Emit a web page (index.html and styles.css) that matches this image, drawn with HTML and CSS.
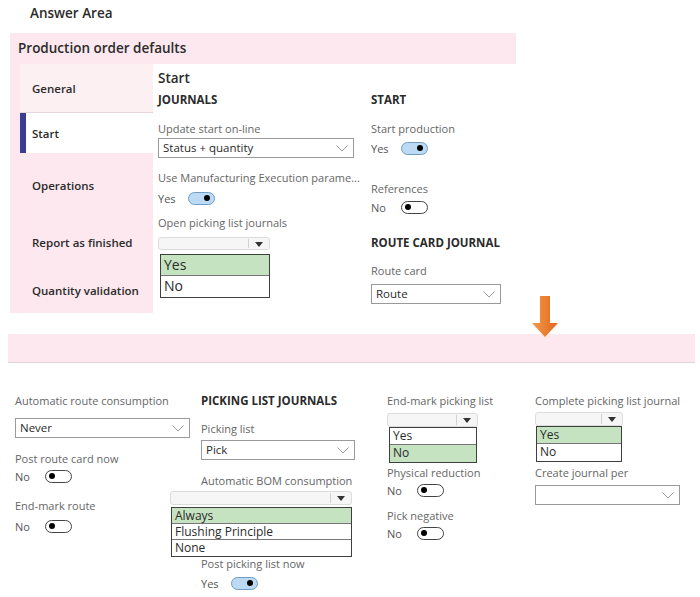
FILE: index.html
```html
<!DOCTYPE html>
<html lang="en">
<head>
    <meta charset="UTF-8">
    <title>Answer Area</title>
    <link rel="stylesheet" href="styles.css">
</head>
<body>
    <div class="title">Answer Area</div>

    <div class="top">
        <div class="panel">
            <div class="panel-header">Production order defaults</div>
            <div class="panel-body">
                <!-- Tabs -->
                <div class="sidebar">
                    <div class="tab tab-general">General</div>
                    <div class="tab tab-start active">Start</div>
                    <div class="tab tab-ops">Operations</div>
                    <div class="tab tab-report">Report as finished</div>
                    <div class="tab tab-qty">Quantity validation</div>
                </div>

                <div class="content">
                    <div class="content-title">Start</div>
                    <div class="columns">
                        <div class="col col-journals">
                            <div class="section">JOURNALS</div>
                            <div class="label l-update">Update start on-line</div>
                            <div class="select s-status">Status + quantity<svg class="chev" viewBox="0 0 12 7"><polyline points="0.5,0.5 6,6 11.5,0.5"/></svg></div>
                            <div class="label l-mes">Use Manufacturing Execution parame...</div>
                            <div class="toggle-row t-mes"><span class="val">Yes</span><span class="toggle on"></span></div>
                            <div class="label l-open">Open picking list journals</div>
                            <div class="stub stub-open"><span class="stub-arrow"></span></div>
                            <div class="options big opt-open">
                                <div class="opt sel">Yes</div>
                                <div class="opt">No</div>
                            </div>
                        </div>
                        <div class="col col-start">
                            <div class="section">START</div>
                            <div class="label l-update">Start production</div>
                            <div class="toggle-row t-prod"><span class="val">Yes</span><span class="toggle on"></span></div>
                            <div class="label l-refs">References</div>
                            <div class="toggle-row t-refs"><span class="val">No</span><span class="toggle"></span></div>
                            <div class="section s-route">ROUTE CARD JOURNAL</div>
                            <div class="label l-routecard">Route card</div>
                            <div class="select s-route-sel">Route<svg class="chev" viewBox="0 0 12 7"><polyline points="0.5,0.5 6,6 11.5,0.5"/></svg></div>
                        </div>
                    </div>
                </div>
            </div>
        </div>
        <div class="arrow">
            <svg viewBox="0 0 26 42" width="26" height="42">
                <defs>
                    <linearGradient id="og" x1="0" y1="0" x2="1" y2="0">
                        <stop offset="0" stop-color="#f39a4d"/>
                        <stop offset="1" stop-color="#e2661a"/>
                    </linearGradient>
                </defs>
                <polygon points="8,0 18,0 18,27 26,27 13,41 0,27 8,27" fill="url(#og)"/>
            </svg>
        </div>
    </div>

    <div class="bar"></div>

    <div class="bottom">
        <div class="col b-col1">
            <div class="label l-arc">Automatic route consumption</div>
            <div class="select s-never">Never<svg class="chev" viewBox="0 0 12 7"><polyline points="0.5,0.5 6,6 11.5,0.5"/></svg></div>
            <div class="label l-prc">Post route card now</div>
            <div class="toggle-row t-prc"><span class="val">No</span><span class="toggle"></span></div>
            <div class="label l-emr">End-mark route</div>
            <div class="toggle-row t-emr"><span class="val">No</span><span class="toggle"></span></div>
        </div>

        <div class="col b-col2">
            <div class="section s-pick">PICKING LIST JOURNALS</div>
            <div class="label l-pl">Picking list</div>
            <div class="select s-pick-sel">Pick<svg class="chev" viewBox="0 0 12 7"><polyline points="0.5,0.5 6,6 11.5,0.5"/></svg></div>
            <div class="label l-bom">Automatic BOM consumption</div>
            <div class="stub stub-bom"><span class="stub-arrow"></span></div>
            <div class="options opt-bom">
                <div class="opt sel">Always</div>
                <div class="opt">Flushing Principle</div>
                <div class="opt">None</div>
            </div>
            <div class="label l-ppl">Post picking list now</div>
            <div class="toggle-row t-ppl"><span class="val">Yes</span><span class="toggle on"></span></div>
        </div>

        <div class="col b-col3">
            <div class="label l-top">End-mark picking list</div>
            <div class="stub stub-emp"><span class="stub-arrow"></span></div>
            <div class="options opt-emp">
                <div class="opt">Yes</div>
                <div class="opt sel">No</div>
            </div>
            <div class="label l-phys">Physical reduction</div>
            <div class="toggle-row t-phys"><span class="val">No</span><span class="toggle"></span></div>
            <div class="label l-neg">Pick negative</div>
            <div class="toggle-row t-neg"><span class="val">No</span><span class="toggle"></span></div>
        </div>

        <div class="col b-col4">
            <div class="label l-top">Complete picking list journal</div>
            <div class="stub stub-cpl"><span class="stub-arrow"></span></div>
            <div class="options opt-cpl">
                <div class="opt sel">Yes</div>
                <div class="opt">No</div>
            </div>
            <div class="label l-phys">Create journal per</div>
            <div class="select s-create"><svg class="chev" viewBox="0 0 12 7"><polyline points="0.5,0.5 6,6 11.5,0.5"/></svg></div>
        </div>
    </div>
</body>
</html>
```

FILE: styles.css
```css
:root {
    --pink: #fce8ee;
    --pink-light: #fdf0f3;
    --text: #2b2b2b;
    --label: #666666;
    --green: #c5e2c1;
    --blue-bar: #3a3d91;
}

* {
    box-sizing: border-box;
}

body {
    margin: 0;
    width: 700px;
    height: 597px;
    overflow: hidden;
    background: white;
    color: var(--text);
    font-family: 'Open Sans', 'Noto Sans', sans-serif;
    font-size: 11px;
}

.title {
    padding: 3px 0 0 30px;
    height: 33px;
    font-size: 13.5px;
    font-weight: 600;
    line-height: 20px;
}

/* Top panel */
.top {
    position: relative;
    height: 301px;
}

.panel {
    margin-left: 10px;
    width: 506px;
}

.panel-header {
    background: var(--pink);
    height: 31px;
    padding-left: 8px;
    font-size: 13.5px;
    font-weight: 600;
    line-height: 31px;
}

.panel-body {
    display: flex;
}

.sidebar {
    width: 143px;
    height: 249px;
    background: var(--pink);
    padding-left: 10px;
    display: flex;
    flex-direction: column;
}

.tab {
    display: flex;
    align-items: center;
    padding-left: 12px;
    font-size: 11.5px;
    font-weight: 600;
}

.tab-general {
    height: 49px;
    background: var(--pink-light);
    border-bottom: 1px solid #e6d5da;
}
.tab-start { height: 40px; }
.tab-ops { height: 64px; }
.tab-report { height: 50px; }
.tab-qty { height: 46px; }

.tab.active {
    background: white;
    border-left: 6px solid var(--blue-bar);
    padding-left: 6px;
}

.content {
    flex: 1;
    padding-left: 5px;
}

.content-title {
    height: 28px;
    padding-top: 5px;
    font-size: 13.5px;
    font-weight: 600;
    line-height: 18px;
}

.columns {
    display: flex;
}

.col {
    display: flex;
    flex-direction: column;
    align-items: flex-start;
}

.col-journals {
    width: 213px;
}

.section {
    margin-top: 1px;
    font-size: 11.5px;
    font-weight: 700;
    line-height: 14px;
    white-space: nowrap;
}

.label {
    color: var(--label);
    font-size: 11px;
    line-height: 14px;
    white-space: nowrap;
}

.select {
    position: relative;
    height: 20px;
    border: 1px solid #9a9a9a;
    padding-left: 4px;
    font-size: 11.5px;
    line-height: 18px;
    color: var(--text);
}

.chev {
    position: absolute;
    right: 5px;
    top: 6px;
    width: 12px;
    height: 7px;
    fill: none;
    stroke: #9a9a9a;
    stroke-width: 1;
}

.toggle-row {
    display: flex;
    align-items: center;
    height: 14px;
}

.val {
    width: 30px;
    font-size: 11px;
    color: #555;
}

.toggle {
    position: relative;
    width: 27px;
    height: 13px;
    border: 1px solid #444;
    border-radius: 7px;
    background: white;
}

.toggle::after {
    content: "";
    position: absolute;
    left: 3px;
    top: 2.5px;
    width: 6px;
    height: 6px;
    border-radius: 50%;
    background: black;
}

.toggle.on {
    background: #bcdaf4;
    border-color: #6f9dc4;
}

.toggle.on::after {
    left: auto;
    right: 4px;
}

.stub {
    position: relative;
    height: 14px;
    border: 1px solid #dcdcdc;
    border-radius: 3px;
    background: #f6f6f6;
}

.stub::before {
    content: "";
    position: absolute;
    right: 20px;
    top: 1px;
    bottom: 1px;
    border-left: 1px solid #d2d2d2;
}

.stub-arrow {
    position: absolute;
    right: 6px;
    top: 4px;
    border-left: 4.5px solid transparent;
    border-right: 4.5px solid transparent;
    border-top: 5px solid #333;
}

.options {
    border: 1.5px solid #3f3f3f;
    background: white;
}

.opt {
    height: 17px;
    padding-left: 3px;
    font-size: 12px;
    line-height: 16px;
    border-bottom: 1px solid #777;
}

.opt:last-child {
    border-bottom: none;
}

.opt.sel {
    background: var(--green);
}

.options.big .opt {
    height: 21px;
    font-size: 14px;
    line-height: 20px;
}

/* Left column positions (top panel) */
.col-journals .l-update { margin-top: 15px; }
.s-status { margin-top: 2px; width: 196px; }
.l-mes { margin-top: 13px; }
.t-mes { margin-top: 6px; }
.l-open { margin-top: 11px; }
.stub-open { margin-top: 7px; width: 112px; height: 13px; }
.opt-open { margin-top: 4px; margin-left: 2px; width: 110px; }

/* Right column positions (top panel) */
.col-start .l-update { margin-top: 15px; }
.t-prod { margin-top: 5px; }
.l-refs { margin-top: 27px; }
.t-refs { margin-top: 4px; }
.s-route { margin-top: 22px; }
.l-routecard { margin-top: 14px; }
.s-route-sel { margin-top: 6px; width: 130px; }

.arrow {
    position: absolute;
    left: 532px;
    top: 0;
}

.arrow svg {
    display: block;
    margin-top: 263px;
}

.bar {
    margin-left: 8px;
    width: 687px;
    height: 29px;
    background: var(--pink);
    border-bottom: 1px solid #e4d4d9;
}

/* Bottom grid */
.bottom {
    display: grid;
    grid-template-columns: 186px 186px 148px 1fr;
    padding-left: 15px;
    padding-top: 31px;
}

.s-never { margin-top: 10px; width: 175px; }
.l-prc { margin-top: 14px; }
.t-prc { margin-top: 3px; }
.l-emr { margin-top: 16px; }
.t-emr { margin-top: 6px; }

.s-pick { margin-top: 0; }
.l-pl { margin-top: 14px; }
.s-pick-sel { margin-top: 4px; width: 154px; }
.l-bom { margin-top: 14px; }
.stub-bom { margin-top: 3px; margin-left: -31px; width: 182px; }
.opt-bom { margin-top: 2px; margin-left: -30px; width: 181px; }
.opt-bom .opt { height: 16px; line-height: 15px; }
.l-ppl { margin-top: 0; }
.t-ppl { margin-top: 5px; }

.stub-emp { margin-top: 5px; width: 91px; }
.opt-emp { margin-left: 2px; width: 88px; }
.b-col3 .l-phys { margin-top: 3px; }
.t-phys { margin-top: 3px; }
.l-neg { margin-top: 12px; }
.t-neg { margin-top: 3px; }

.stub-cpl { margin-top: 4px; width: 88px; }
.opt-cpl { margin-left: 1px; width: 86px; }
.b-col4 .l-phys { margin-top: 4px; }
.s-create { margin-top: 5px; width: 145px; }
```
